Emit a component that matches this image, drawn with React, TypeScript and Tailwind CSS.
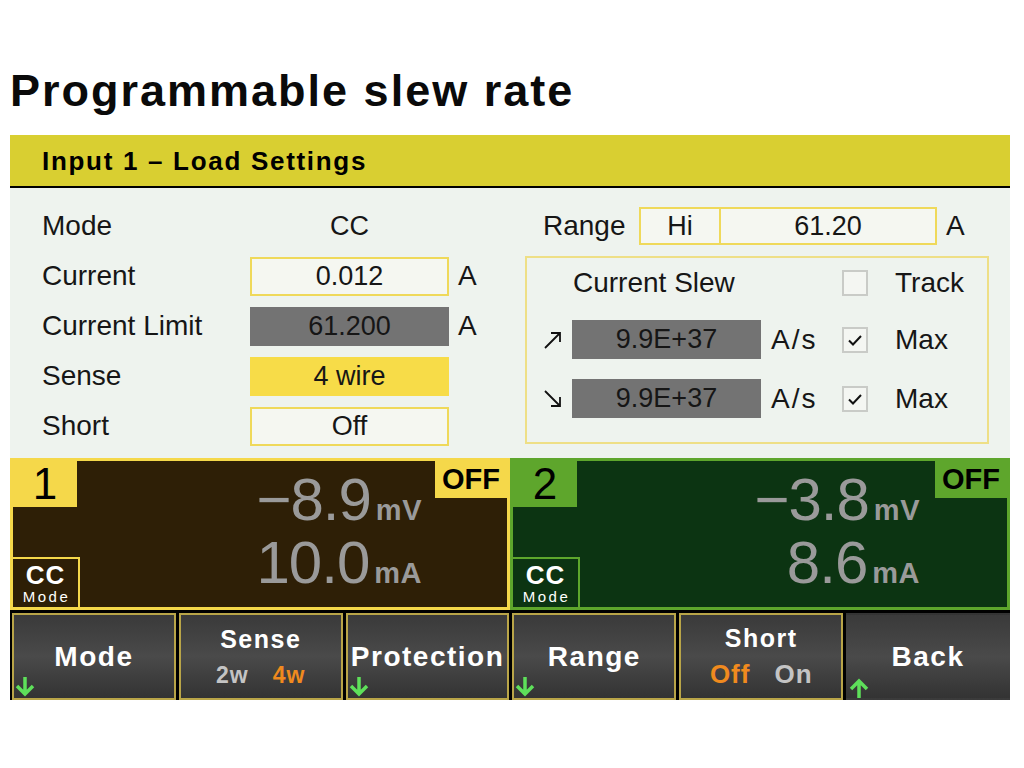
import React from 'react';

type Reading = { value: string; unit: string };

function Checkbox({ checked }: { checked?: boolean }) {
  return (
    <div className="w-[26px] h-[26px] border-2 border-[#c9cbc7] bg-[#f4f6f2] flex items-center justify-center">
      {checked && (
        <svg width="16" height="16" viewBox="0 0 16 16" aria-hidden="true">
          <path d="M2 8.5 L6 12.5 L14 4" fill="none" stroke="#111" strokeWidth="2" />
        </svg>
      )}
    </div>
  );
}

function SlewArrow({ up }: { up?: boolean }) {
  return (
    <svg width="20" height="20" viewBox="0 0 20 20" aria-hidden="true">
      <path
        d={up ? 'M2 18 L17 3 M8 3 H17 V12' : 'M2 2 L17 17 M17 8 V17 H8'}
        fill="none"
        stroke="#111"
        strokeWidth="1.8"
      />
    </svg>
  );
}

function SoftArrow({ up }: { up?: boolean }) {
  return (
    <svg
      className="absolute left-0 bottom-0"
      width="22"
      height="22"
      viewBox="0 0 22 22"
      aria-hidden="true"
    >
      <path
        d={up ? 'M11 5 V22 M3 13 L11 5 L19 13' : 'M11 1 V18 M3 10 L11 18 L19 10'}
        fill="none"
        stroke="#5ee05a"
        strokeWidth="3.5"
      />
    </svg>
  );
}

function SettingRow({ label, children }: { label: string; children?: React.ReactNode }) {
  return (
    <div className="flex items-center h-[50px]">
      <div className="w-[208px]">{label}</div>
      {children}
    </div>
  );
}

function ValueBox({ value, tone }: { value: string; tone: 'outline' | 'gray' | 'yellow' | 'plain' }) {
  const cls =
    tone === 'outline'
      ? 'border-2 border-[#efd95a] bg-[#f5f7f1]'
      : tone === 'gray'
        ? 'bg-[#737373]'
        : tone === 'yellow'
          ? 'bg-[#f7dc48]'
          : '';
  return (
    <div className={`w-[199px] h-[39px] flex items-center justify-center text-[27px] ${cls}`}>
      {value}
    </div>
  );
}

function Channel({
  num,
  border,
  tab,
  inner,
  top,
  bottom,
  pad,
}: {
  num: string;
  border: string;
  tab: string;
  inner: string;
  top: Reading;
  bottom: Reading;
  pad: string;
}) {
  return (
    <div className={`flex w-[500px] h-[152px] border-[3px] ${border} ${inner}`}>
      <div className="w-[67px] flex flex-col justify-between">
        <div className={`w-[64px] h-[46px] flex items-center justify-center text-[44px] leading-none text-black ${tab}`}>
          {num}
        </div>
        <div className={`w-[67px] h-[50px] border-t-2 border-r-2 ${border} flex flex-col items-center justify-center leading-none text-white`}>
          <span className="text-[26px] font-bold tracking-[1px]">CC</span>
          <span className="text-[15px] tracking-[2.5px] mt-[1px] pl-[2px]">Mode</span>
        </div>
      </div>
      <div className={`flex-1 flex flex-col items-end pt-[9px] ${pad} text-[#9a9a9a]`}>
        {[top, bottom].map((r) => (
          <div key={r.unit} className="flex items-baseline leading-none h-[63px]">
            <span className="text-[60px] tracking-[-1px]">{r.value}</span>
            <span className="text-[29px] font-bold ml-[5px] tracking-[0.5px]">{r.unit}</span>
          </div>
        ))}
      </div>
      <div className={`w-[72px] h-[37px] flex items-center justify-center text-[29px] font-bold text-black leading-none ${tab}`}>
        OFF
      </div>
    </div>
  );
}

function SoftKey({
  children,
  arrow,
  plain,
}: {
  children: React.ReactNode;
  arrow?: 'up' | 'down';
  plain?: boolean;
}) {
  return (
    <div
      className={`relative flex-1 flex flex-col items-center justify-center border-2 ${
        plain ? 'border-transparent' : 'border-[#b9a548]'
      } bg-gradient-to-b from-[#3a3a3a] via-[#4a4a4a] to-[#333333] text-white font-bold leading-none`}
    >
      {children}
      {arrow && <SoftArrow up={arrow === 'up'} />}
    </div>
  );
}

export default function App() {
  return (
    <div className="w-[1024px] h-[768px] bg-white font-['Liberation_Sans',Arial,sans-serif] text-[#161616] overflow-hidden">
      <h1 className="pt-[68px] pl-[10px] text-[45px] leading-none font-bold tracking-[2px] text-[#0a0a0a]">
        Programmable slew rate
      </h1>

      <div className="ml-[10px] mt-[22px] w-[1000px]">
        <div className="h-[53px] bg-[#d9cf31] border-b-2 border-black flex items-center pl-[32px] pt-[2px]">
          <span className="text-[26px] font-bold tracking-[1.7px] text-black">Input 1 – Load Settings</span>
        </div>

        <div className="h-[270px] bg-[#eef3ee] pt-[13px] flex text-[28px]">
          <div className="w-[515px] pl-[32px]">
            <SettingRow label="Mode">
              <ValueBox value="CC" tone="plain" />
            </SettingRow>
            <SettingRow label="Current">
              <ValueBox value="0.012" tone="outline" />
              <span className="ml-[9px]">A</span>
            </SettingRow>
            <SettingRow label="Current Limit">
              <ValueBox value="61.200" tone="gray" />
              <span className="ml-[9px]">A</span>
            </SettingRow>
            <SettingRow label="Sense">
              <ValueBox value="4 wire" tone="yellow" />
            </SettingRow>
            <SettingRow label="Short">
              <ValueBox value="Off" tone="outline" />
            </SettingRow>
          </div>

          <div className="w-[464px]">
            <div className="flex items-center h-[50px] pl-[18px]">
              <div className="w-[96px]">Range</div>
              <div className="w-[298px] h-[38px] flex border-2 border-[#efd95a] bg-[#f5f7f1] text-[27px]">
                <div className="w-[80px] flex items-center justify-center border-r-2 border-[#efd95a]">Hi</div>
                <div className="flex-1 flex items-center justify-center">61.20</div>
              </div>
              <span className="ml-[9px]">A</span>
            </div>

            <div className="mt-[5px] h-[188px] border-2 border-[#eedf86] pl-[16px] flex flex-col">
              <div className="flex items-center h-[50px]">
                <div className="w-[29px]" />
                <div className="w-[270px] pl-[1px]">Current Slew</div>
                <Checkbox />
                <span className="ml-[27px]">Track</span>
              </div>
              {[true, false].map((up, i) => (
                <div key={i} className={`flex items-center h-[39px] ${up ? 'mt-[12px]' : 'mt-[20px]'}`}>
                  <div className="w-[29px]">
                    <SlewArrow up={up} />
                  </div>
                  <div className="w-[189px] h-[39px] bg-[#737373] flex items-center justify-center text-[27px]">
                    9.9E+37
                  </div>
                  <div className="w-[81px] pl-[10px] tracking-[2px]">A/s</div>
                  <Checkbox checked />
                  <span className="ml-[27px]">Max</span>
                </div>
              ))}
            </div>
          </div>
        </div>

        <div className="flex">
          <Channel
            num="1"
            border="border-[#f5d84a]"
            tab="bg-[#f5d84a]"
            inner="bg-[#2e1f06]"
            top={{ value: '−8.9', unit: 'mV' }}
            bottom={{ value: '10.0', unit: 'mA' }}
            pad="pr-[13px]"
          />
          <Channel
            num="2"
            border="border-[#5ea62c]"
            tab="bg-[#5ea62c]"
            inner="bg-[#0c3412]"
            top={{ value: '−3.8', unit: 'mV' }}
            bottom={{ value: '8.6', unit: 'mA' }}
            pad="pr-[15px]"
          />
        </div>

        <div className="h-[90px] bg-black pt-[3px] flex gap-[3px] pl-[2px]">
          <SoftKey arrow="down">
            <span className="text-[28px] tracking-[1.5px]">Mode</span>
          </SoftKey>
          <SoftKey>
            <span className="text-[25px] tracking-[1.5px]">Sense</span>
            <span className="text-[23px] mt-[12px] tracking-[1px]">
              <span className="text-[#c4c4c4]">2w</span>
              <span className="text-[#f08a1e] ml-[24px]">4w</span>
            </span>
          </SoftKey>
          <SoftKey arrow="down">
            <span className="text-[28px] tracking-[1.5px]">Protection</span>
          </SoftKey>
          <SoftKey arrow="down">
            <span className="text-[28px] tracking-[1.5px]">Range</span>
          </SoftKey>
          <SoftKey>
            <span className="text-[25px] tracking-[1.5px]">Short</span>
            <span className="text-[26px] mt-[10px] tracking-[1px]">
              <span className="text-[#f08a1e]">Off</span>
              <span className="text-[#c4c4c4] ml-[24px]">On</span>
            </span>
          </SoftKey>
          <SoftKey arrow="up" plain>
            <span className="text-[28px] tracking-[1.5px]">Back</span>
          </SoftKey>
        </div>
      </div>
    </div>
  );
}
